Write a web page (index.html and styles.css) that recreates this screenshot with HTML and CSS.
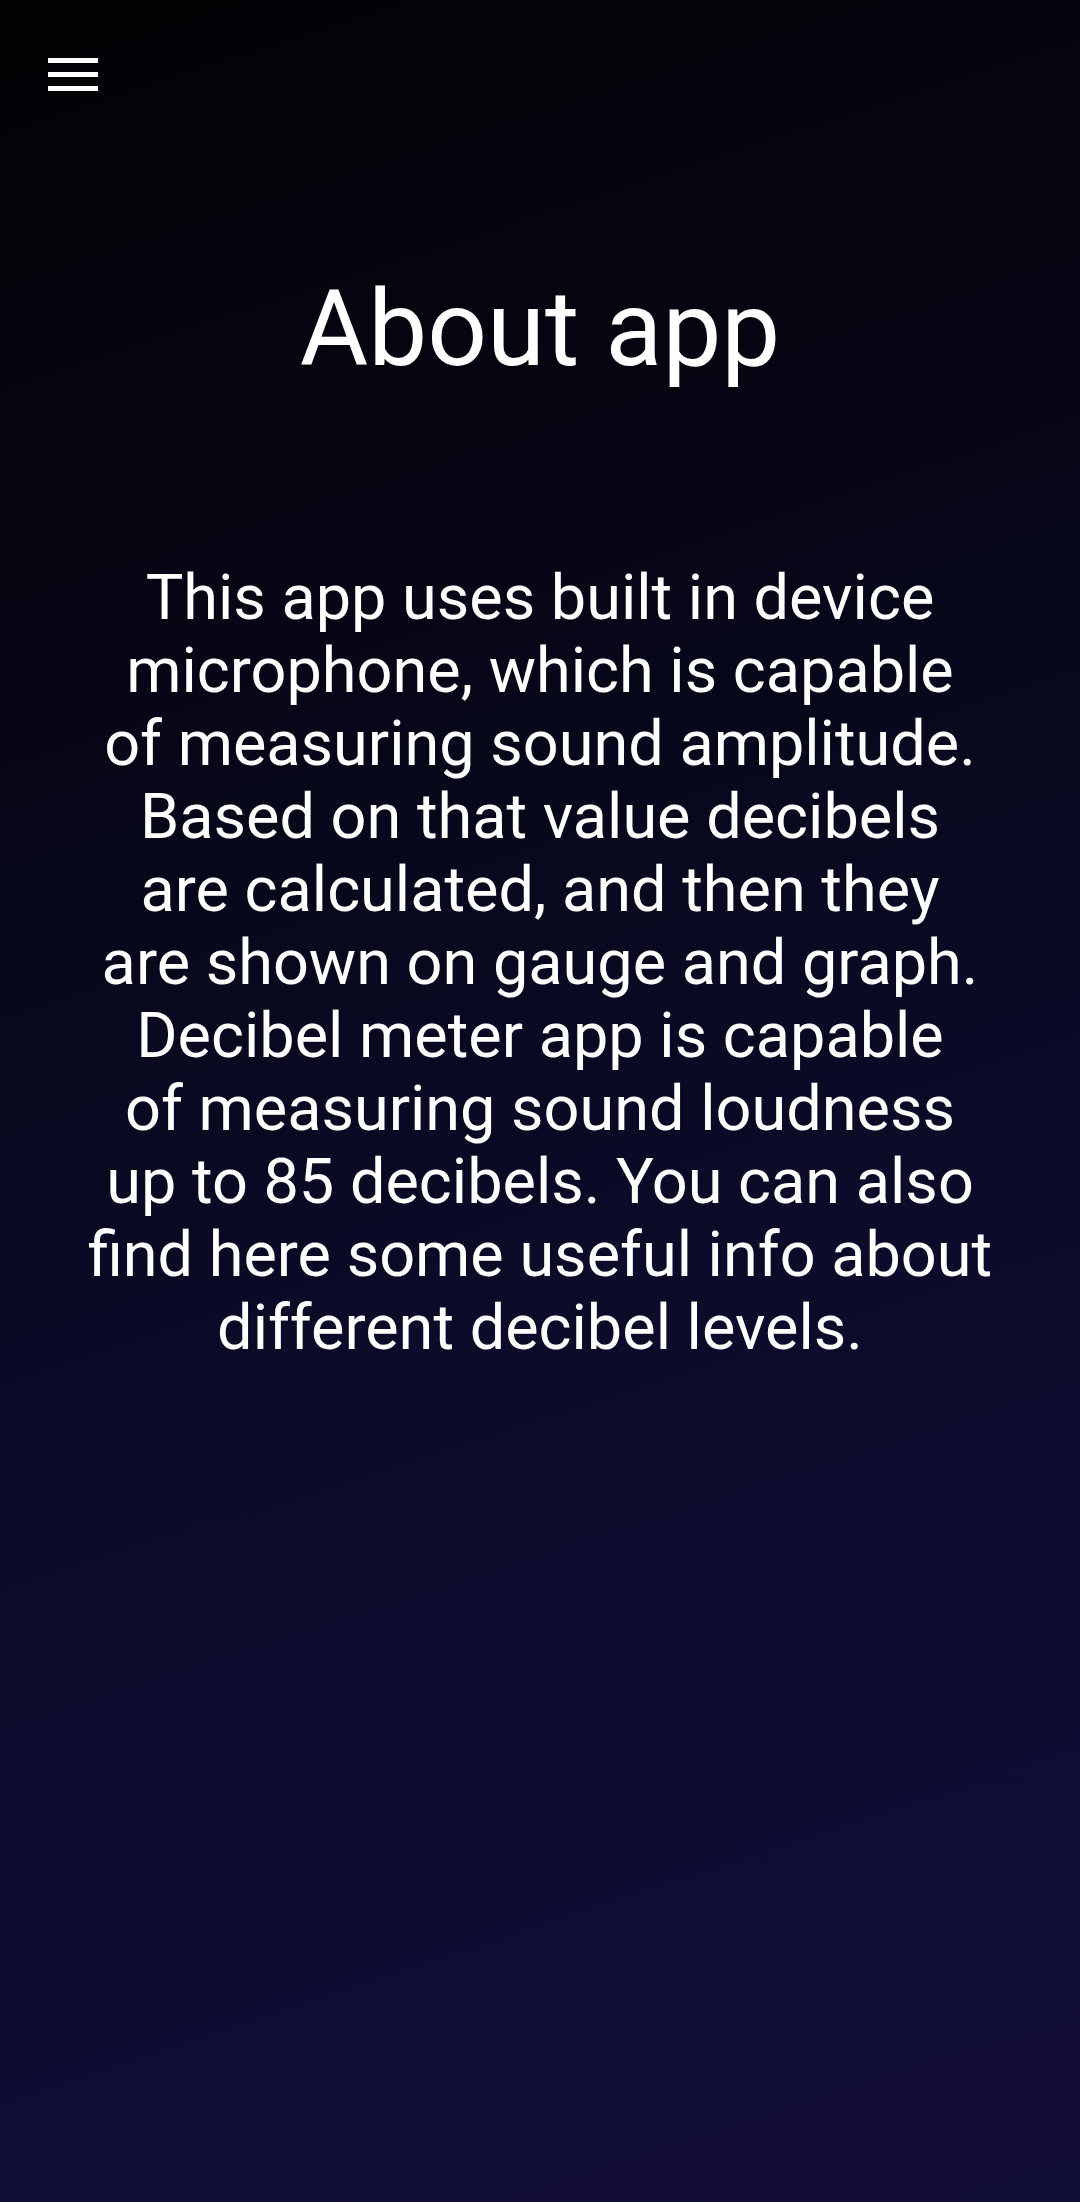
FILE: index.html
```html
<!DOCTYPE html>
<html lang="en">
<head>
<meta charset="utf-8">
<title>About app</title>
<link rel="stylesheet" href="styles.css">
</head>
<body>
<div class="screen">
  <header class="toolbar">
    <button class="menu" aria-label="Menu">
      <span class="bar"></span>
      <span class="bar"></span>
      <span class="bar"></span>
    </button>
  </header>
  <main class="content">
    <h1 class="title">About app</h1>
    <p class="about">This app uses built in device<br>microphone, which is capable<br>of measuring sound amplitude.<br>Based on that value decibels<br>are calculated, and then they<br>are shown on gauge and graph.<br>Decibel meter app is capable<br>of measuring sound loudness<br>up to 85 decibels. You can also<br>find here some useful info about<br>different decibel levels.</p>
  </main>
</div>
</body>
</html>
```
FILE: styles.css
```css
html, body {
  margin: 0;
  padding: 0;
}
body {
  width: 1080px;
  height: 2202px;
  overflow: hidden;
  font-family: Roboto, "Noto Sans", sans-serif;
  color: #ffffff;
}
.screen {
  width: 1080px;
  height: 2202px;
  background: linear-gradient(162deg, #020204 0%, #07071a 35%, #0c0b2a 60%, #120e3a 100%);
  display: flex;
  flex-direction: column;
}
.toolbar {
  height: 150px;
  display: flex;
  align-items: flex-start;
}
.menu {
  margin: 58px 0 0 48px;
  padding: 0;
  border: 0;
  background: none;
  width: 50px;
  display: flex;
  flex-direction: column;
  gap: 9px;
}
.bar {
  display: block;
  width: 50px;
  height: 5px;
  background: #ffffff;
}
.content {
  display: flex;
  flex-direction: column;
  align-items: center;
}
.title {
  margin: 118px 0 0;
  font-size: 105px;
  font-weight: 400;
  line-height: 123px;
  text-align: center;
}
.about {
  margin: 170px 0 0;
  font-size: 63px;
  line-height: 73px;
  text-align: center;
  font-weight: 400;
}
```
